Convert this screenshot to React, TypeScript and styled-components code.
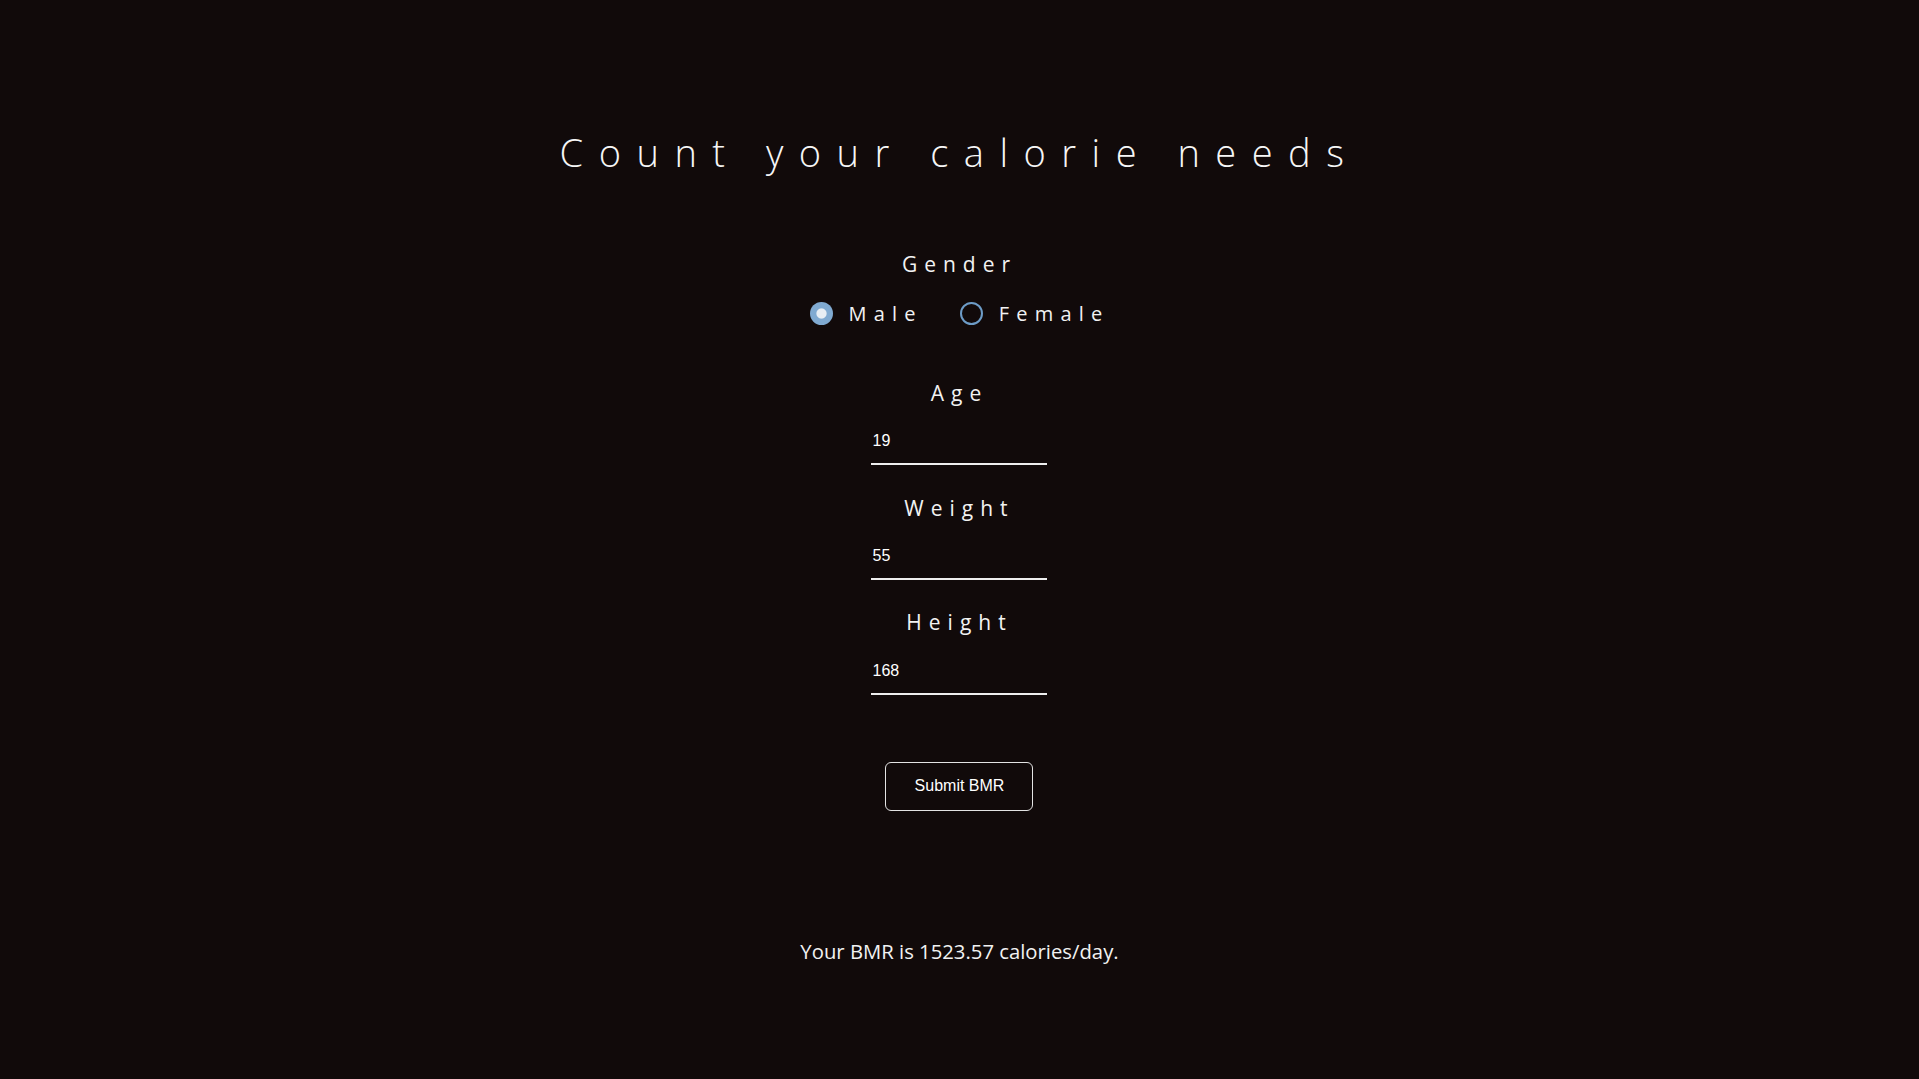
import React, { useState } from "react";
import styled, { createGlobalStyle } from "styled-components";

const GlobalStyle = createGlobalStyle`
  html, body {
    margin: 0;
    padding: 0;
    background: #110a0a;
  }
  body {
    min-height: 100vh;
    color: #f4f4f4;
    font-family: "Open Sans", "Liberation Sans", sans-serif;
  }
  * { box-sizing: border-box; }
`;

const Page = styled.main`
  min-height: 100vh;
  display: flex;
  flex-direction: column;
  align-items: center;
  padding-top: 133px;
`;

const Title = styled.h1`
  margin: 0;
  font-family: "Open Sans", sans-serif;
  font-weight: 300;
  font-size: 38px;
  line-height: 38px;
  letter-spacing: 15.5px;
  color: #f6f6f6;
  white-space: nowrap;
`;

const Form = styled.form`
  display: flex;
  flex-direction: column;
  align-items: center;
`;

const Label = styled.label<{ $gap: number }>`
  display: block;
  margin-top: ${(p) => p.$gap}px;
  font-family: "Open Sans", sans-serif;
  font-size: 21px;
  line-height: 21px;
  letter-spacing: 7px;
  color: #f2f2f2;
`;

const RadioRow = styled.div`
  display: flex;
  align-items: center;
  margin-top: 27px;
  gap: 37px;
`;

const RadioOption = styled.label`
  display: flex;
  align-items: center;
  gap: 16px;
  font-family: "Open Sans", sans-serif;
  font-size: 20px;
  line-height: 20px;
  letter-spacing: 7.2px;
  color: #f2f2f2;
  cursor: pointer;
`;

const RadioInput = styled.input`
  appearance: none;
  -webkit-appearance: none;
  margin: 0;
  width: 23px;
  height: 23px;
  border-radius: 50%;
  border: 2px solid #6d9cc7;
  background: transparent;
  cursor: pointer;

  &:checked {
    border: none;
    background: radial-gradient(circle, #e8eef4 0 4.6px, #80aad1 5.6px);
  }
`;

const TextInput = styled.input`
  display: block;
  margin-top: 28.45px;
  width: 176px;
  height: 33px;
  padding: 0 0 13px 1px;
  border: none;
  border-bottom: 2px solid #eeeeee;
  border-radius: 0;
  background: transparent;
  color: #ffffff;
  font-family: "Liberation Sans", Arial, sans-serif;
  font-size: 16px;
  line-height: 18px;
  outline: none;
`;

const SubmitButton = styled.button`
  margin-top: 67px;
  width: 148px;
  height: 49px;
  border: 1.5px solid #e4e4e4;
  border-radius: 6px;
  background: transparent;
  color: #ffffff;
  font-family: "Liberation Sans", Arial, sans-serif;
  font-size: 16px;
  cursor: pointer;
`;

const Result = styled.p`
  margin: 130px 0 0;
  font-family: "Open Sans", sans-serif;
  font-size: 20.3px;
  line-height: 20px;
  color: #f2f2f2;
`;

type Gender = "male" | "female";

function computeBmr(g: Gender, age: number, weight: number, height: number) {
  if (g === "male") {
    return 88.362 + 13.397 * weight + 4.799 * height - 5.677 * age;
  }
  return 447.593 + 9.247 * weight + 3.098 * height - 4.33 * age;
}

export default function App() {
  const [gender, setGender] = useState<Gender>("male");
  const [age, setAge] = useState("19");
  const [weight, setWeight] = useState("55");
  const [height, setHeight] = useState("168");
  const [bmr, setBmr] = useState<number | null>(computeBmr("male", 19, 55, 168));

  const onSubmit = (e: React.FormEvent) => {
    e.preventDefault();
    setBmr(computeBmr(gender, Number(age), Number(weight), Number(height)));
  };

  return (
    <>
      <GlobalStyle />
      <Page>
        <Title>Count your calorie needs</Title>
        <Form onSubmit={onSubmit}>
          <Label as="div" $gap={83}>Gender</Label>
          <RadioRow>
            <RadioOption>
              <RadioInput
                type="radio"
                name="gender"
                checked={gender === "male"}
                onChange={() => setGender("male")}
              />
              Male
            </RadioOption>
            <RadioOption>
              <RadioInput
                type="radio"
                name="gender"
                checked={gender === "female"}
                onChange={() => setGender("female")}
              />
              Female
            </RadioOption>
          </RadioRow>

          <Label htmlFor="age" $gap={58}>Age</Label>
          <TextInput id="age" type="text" value={age} onChange={(e) => setAge(e.target.value)} />

          <Label htmlFor="weight" $gap={32.25}>Weight</Label>
          <TextInput id="weight" type="text" value={weight} onChange={(e) => setWeight(e.target.value)} />

          <Label htmlFor="height" $gap={32.25}>Height</Label>
          <TextInput id="height" type="text" value={height} onChange={(e) => setHeight(e.target.value)} />

          <SubmitButton type="submit">Submit BMR</SubmitButton>
        </Form>
        {bmr !== null && <Result>Your BMR is {bmr.toFixed(2)} calories/day.</Result>}
      </Page>
    </>
  );
}
